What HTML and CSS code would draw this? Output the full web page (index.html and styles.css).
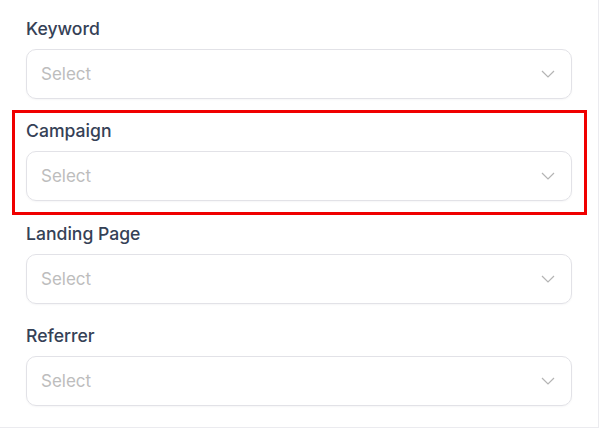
FILE: index.html
```html
<!DOCTYPE html>
<html>
<head>
<meta charset="utf-8">
<link rel="stylesheet" href="styles.css">
</head>
<body>
<div class="panel">
  <div class="field">
    <label class="label">Keyword</label>
    <div class="select"><span class="placeholder">Select</span><svg class="chev" width="14" height="8" viewBox="0 0 14 8"><path d="M1 1l6 6 6-6" fill="none" stroke="#b4b4b4" stroke-width="1.2"/></svg></div>
  </div>
  <div class="field">
    <label class="label">Campaign</label>
    <div class="select"><span class="placeholder">Select</span><svg class="chev" width="14" height="8" viewBox="0 0 14 8"><path d="M1 1l6 6 6-6" fill="none" stroke="#b4b4b4" stroke-width="1.2"/></svg></div>
  </div>
  <div class="field">
    <label class="label">Landing Page</label>
    <div class="select"><span class="placeholder">Select</span><svg class="chev" width="14" height="8" viewBox="0 0 14 8"><path d="M1 1l6 6 6-6" fill="none" stroke="#b4b4b4" stroke-width="1.2"/></svg></div>
  </div>
  <div class="field">
    <label class="label">Referrer</label>
    <div class="select"><span class="placeholder">Select</span><svg class="chev" width="14" height="8" viewBox="0 0 14 8"><path d="M1 1l6 6 6-6" fill="none" stroke="#b4b4b4" stroke-width="1.2"/></svg></div>
  </div>
  <div class="highlight"></div>
</div>
</body>
</html>
```
FILE: styles.css
```css
html, body {
  margin: 0;
  padding: 0;
  background: #fff;
}
body {
  font-family: Inter, "Noto Sans", sans-serif;
}
.panel {
  position: relative;
  width: 572px;
  padding: 17px 0 21px 26px;
  border-right: 1px solid #ebebef;
  border-bottom: 1px solid #ebebef;
  display: flex;
  flex-direction: column;
  gap: 20.33px;
}
.field {
  display: flex;
  flex-direction: column;
  gap: 8px;
}
.label {
  font-size: 17.6px;
  line-height: 24px;
  font-weight: 450;
  color: #354156;
}
.select {
  box-sizing: border-box;
  width: 546px;
  height: 50px;
  border: 1px solid #e2e2e7;
  border-radius: 10px;
  display: flex;
  align-items: center;
  justify-content: space-between;
  padding: 0 16px 0 14px;
  box-shadow: 0 1px 2px rgba(16, 24, 40, 0.04);
}
.placeholder {
  font-size: 17px;
  color: #bdbdbd;
}
.chev {
  display: block;
}
.highlight {
  position: absolute;
  left: 12px;
  top: 110px;
  width: 569px;
  height: 99px;
  border: 3px solid #f00000;
  pointer-events: none;
}
```
